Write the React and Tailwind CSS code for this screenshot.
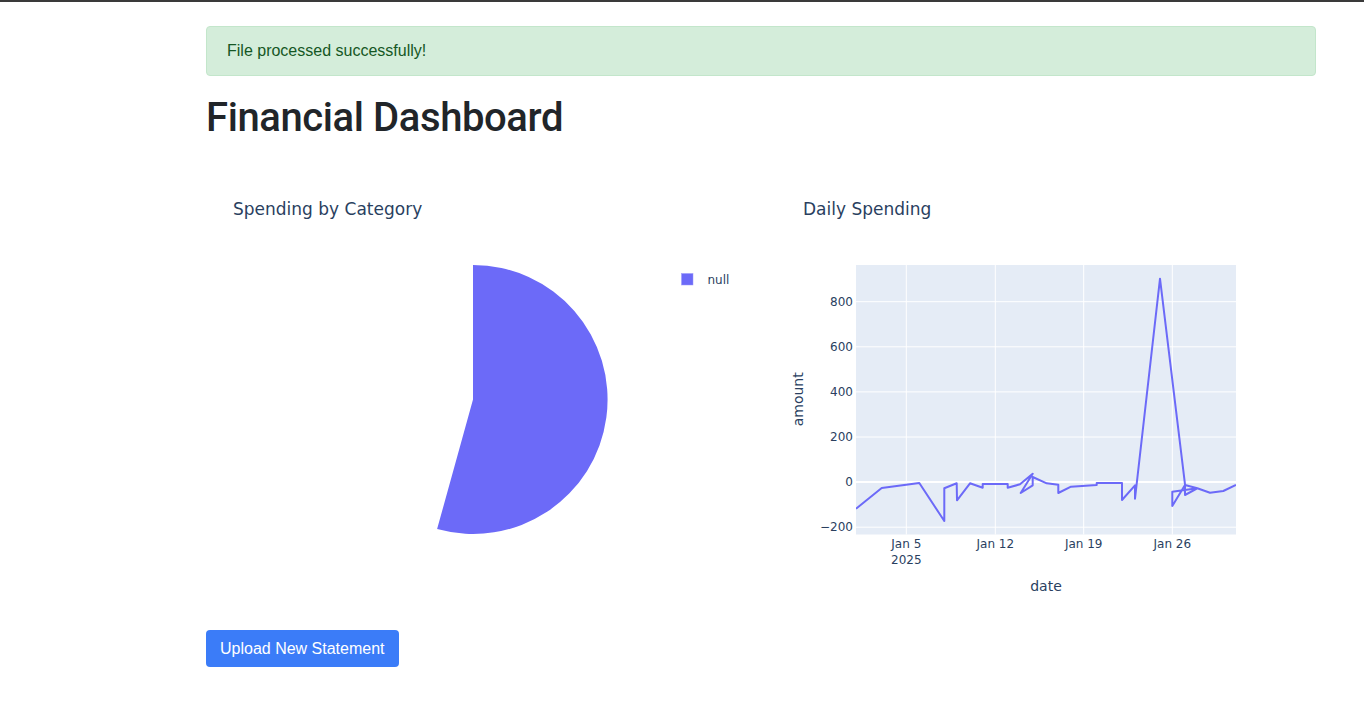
import React from "react";

const PF = "'DejaVu Sans', verdana, arial, sans-serif";
const C = "#6c6af8";

function PieFigure() {
  return (
    <svg width="540" height="450" viewBox="0 0 540 450" className="block">
      <text x="27" y="43.5" dominantBaseline="central" fontFamily={PF} fontSize="17" fill="#2a3f5f">
        Spending by Category
      </text>
      <path d="M 267 234.5 L 267 100 A 134.5 134.5 0 1 1 231.1 364.1 Z" fill={C} />
      <rect x="475.5" y="108.5" width="11.5" height="11.5" fill={C} stroke="#9a98fb" strokeWidth="0.5" />
      <text x="501.5" y="115" dominantBaseline="central" fontFamily={PF} fontSize="12" fill="#2a3f5f">
        null
      </text>
    </svg>
  );
}

const pts = [
  [80, 343.7], [105.7, 323], [143.3, 318], [168.3, 356], [168.3, 323.3], [180.7, 318.3],
  [181, 335.3], [194, 318.3], [206.7, 322.7], [206.7, 319], [231.7, 319], [231.7, 322.7],
  [244, 319.3], [256.7, 308.7], [244.7, 328], [256.7, 320.3], [256.7, 312], [270.7, 318.3],
  [282.3, 319.7], [282.3, 328], [295, 321.7], [320.7, 320], [320.7, 318], [346, 318],
  [346, 335], [359, 320.3], [359, 333.7], [384, 113.7], [409, 319.3], [409, 330],
  [421.3, 323.3], [396.3, 326.7], [396.3, 341], [409, 320], [421.3, 323.3], [434, 327.7],
  [447.3, 326], [460, 320],
];

function LineFigure() {
  const yTicks = [
    [136.7, "800"], [181.8, "600"], [226.9, "400"], [272, "200"], [317, "0"], [362.2, "\u2212200"],
  ];
  const xTicks = [
    [130.3, "Jan 5"], [219.3, "Jan 12"], [307.7, "Jan 19"], [396.3, "Jan 26"],
  ];
  return (
    <svg width="540" height="450" viewBox="0 0 540 450" className="block">
      <defs>
        <clipPath id="plotclip">
          <rect x="80" y="100" width="380" height="269.5" />
        </clipPath>
      </defs>
      <text x="27" y="43.5" dominantBaseline="central" fontFamily={PF} fontSize="17" fill="#2a3f5f">
        Daily Spending
      </text>
      <rect x="80" y="100" width="380" height="269.5" fill="#e5ecf6" />
      {yTicks.map(([y, l]) => (
        <line key={l} x1="80" x2="460" y1={y} y2={y} stroke="#ffffff" strokeWidth={l === "0" ? 2 : 1} />
      ))}
      {xTicks.map(([x, l]) => (
        <line key={l} x1={x} x2={x} y1="100" y2="369.5" stroke="#ffffff" strokeWidth="1" />
      ))}
      <g clipPath="url(#plotclip)">
        <polyline
          points={pts.map((p) => p.join(",")).join(" ")}
          fill="none"
          stroke={C}
          strokeWidth="2"
          strokeLinejoin="round"
        />
      </g>
      {yTicks.map(([y, l]) => (
        <text key={l} x="77" y={y} textAnchor="end" dominantBaseline="central" fontFamily={PF} fontSize="12" fill="#2a3f5f">
          {l}
        </text>
      ))}
      {xTicks.map(([x, l]) => (
        <text key={l} x={x} y="378.7" textAnchor="middle" dominantBaseline="central" fontFamily={PF} fontSize="12" fill="#2a3f5f">
          {l}
        </text>
      ))}
      <text x="130.3" y="394.7" textAnchor="middle" dominantBaseline="central" fontFamily={PF} fontSize="12" fill="#2a3f5f">
        2025
      </text>
      <text
        x="22.3"
        y="234.3"
        textAnchor="middle"
        dominantBaseline="central"
        fontFamily={PF}
        fontSize="14"
        fill="#2a3f5f"
        transform="rotate(-90 22.3 234.3)"
      >
        amount
      </text>
      <text x="270" y="421" textAnchor="middle" dominantBaseline="central" fontFamily={PF} fontSize="14" fill="#2a3f5f">
        date
      </text>
    </svg>
  );
}

export default function App() {
  return (
    <div className="min-h-[701px] bg-white font-['Liberation_Sans',Arial,sans-serif] text-[#212529]">
      <div className="h-[2px] bg-[#3a3a3a]" />
      <div className="ml-[206px] w-[1110px] pt-[24px]">
        <div className="rounded-[4px] border border-[#c3e6cb] bg-[#d4edda] px-[20px] py-[12px] text-[16px] leading-[24px] text-[#155724]">
          File processed successfully!
        </div>
        <h1 className="mt-[18px] font-['Roboto',sans-serif] text-[40px] font-medium leading-[48px] tracking-[-0.4px]">
          Financial Dashboard
        </h1>
        <div className="mt-[23px] flex justify-between">
          <PieFigure />
          <LineFigure />
        </div>
        <div className="mt-[15px]">
          <button className="rounded-[4px] bg-[#3b7cf8] px-[14px] py-[6px] text-[16px] leading-[25px] text-white">
            Upload New Statement
          </button>
        </div>
      </div>
    </div>
  );
}
